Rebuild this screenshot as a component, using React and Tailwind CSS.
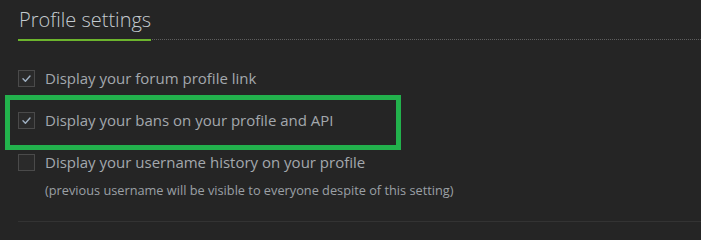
import React from "react";

function Check({ checked }) {
  return (
    <span className="flex h-[17px] w-[17px] shrink-0 items-center justify-center border border-[#4a4a4a] bg-[#2a2a2a]">
      {checked && (
        <svg width="11" height="11" viewBox="0 0 11 11" fill="none">
          <path d="M2 5.8 L4.4 8.2 L9 3" stroke="#9fb0c2" strokeWidth="1.4" strokeLinecap="round" strokeLinejoin="round" />
        </svg>
      )}
    </span>
  );
}

export default function App() {
  return (
    <div
      className="relative h-[240px] w-[701px] overflow-hidden bg-[#252525] pl-[18px]"
      style={{ fontFamily: '"Open Sans", "Noto Sans", sans-serif' }}
    >
      <div className="flex items-end border-b border-dotted border-[#5e5e5e] pt-[7px]">
        <h2 className="relative z-10 -mb-[2px] border-b-2 border-[#6cb52d] pb-[6px] pl-px text-[20px] font-light leading-[26px] text-[#c4cbd0]">
          Profile settings
        </h2>
      </div>
      <div className="mt-[30px] flex flex-col text-[15px] text-[#a3a8ad]">
        <div className="flex h-[17px] items-center gap-[10px]">
          <Check checked />
          <span className="leading-[17px]">Display your forum profile link</span>
        </div>
        <div className="mt-[25px] flex h-[17px] items-center gap-[10px]">
          <Check checked />
          <span className="leading-[17px]">Display your bans on your profile and API</span>
        </div>
        <div className="mt-[25px] flex h-[17px] items-center gap-[10px]">
          <Check />
          <span className="leading-[17px]">Display your username history on your profile</span>
        </div>
        <div className="mt-[10px] pl-[27px] text-[12.75px] leading-[18px] text-[#9ba0a5]">
          (previous username will be visible to everyone despite of this setting)
        </div>
        <div className="mt-[22px] border-t border-[#333333]" />
      </div>
      <div className="pointer-events-none absolute left-[5px] top-[95px] h-[55px] w-[396px] border-[5px] border-[#22b14c]" />
    </div>
  );
}
